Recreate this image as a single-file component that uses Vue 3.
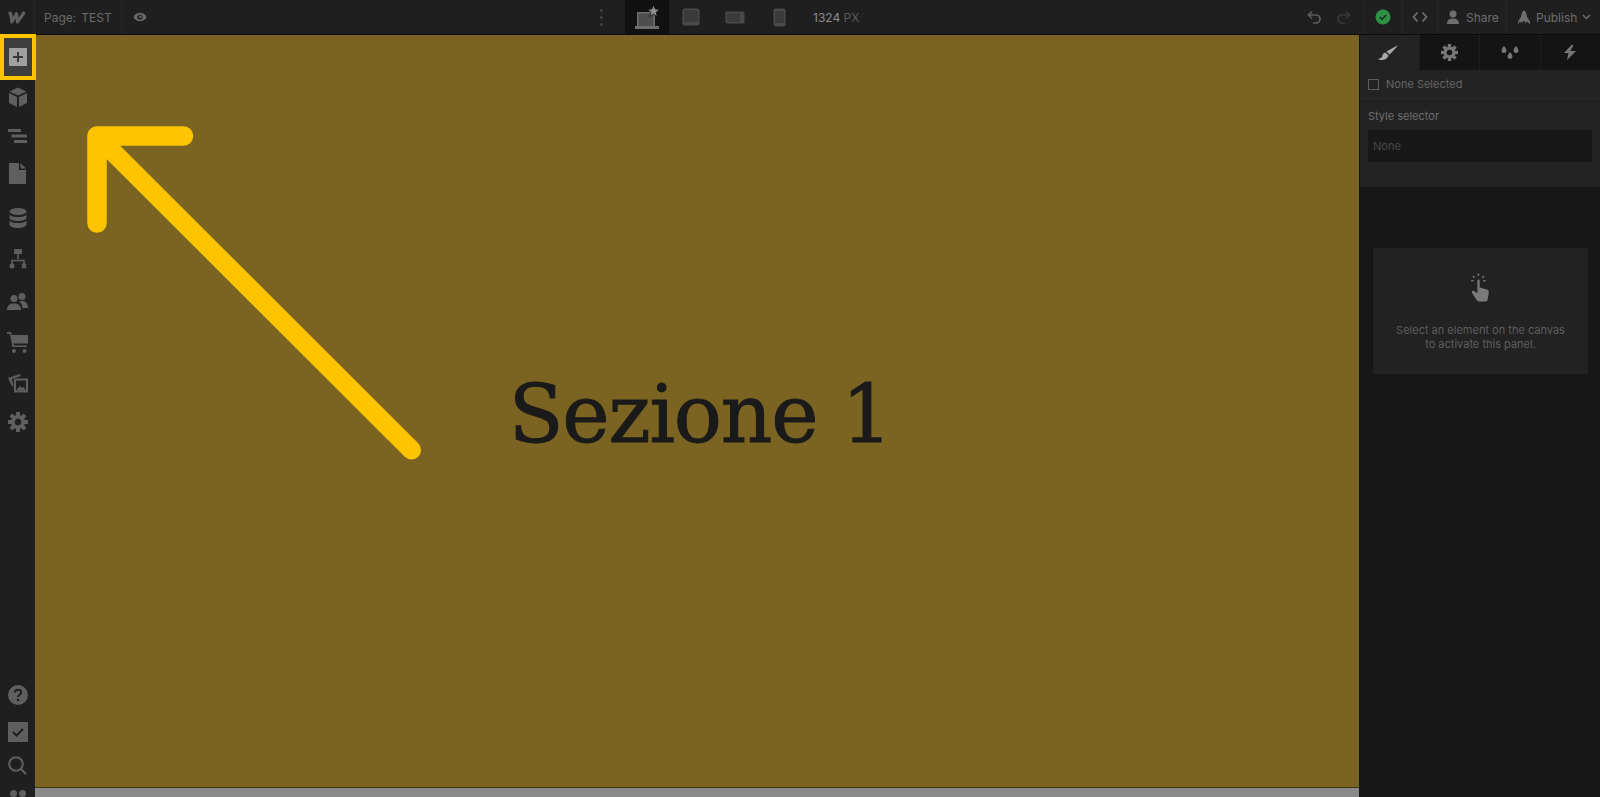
<template>
  <div class="designer">
    <!-- top bar -->
    <header class="topbar">
      <div class="top-left">
        <div class="logo-cell">
          <svg width="20" height="15" viewBox="0 0 19 15" fill="none"><path d="M1 3.200h2.200L4.300 12 9 3.500 10 12 17 2" stroke="#606060" stroke-width="3.100" stroke-linejoin="round"/></svg>
        </div>
        <div class="page-cell"><span class="page-label">Page:</span><span>TEST</span></div>
        <div class="eye-cell">
          <svg width="14" height="12" viewBox="0 0 14 12"><path d="M0.500 6C2 3 4.300 1.800 7 1.800S12 3 13.500 6C12 9 9.700 10.200 7 10.200S2 9 .5 6z" fill="#6a6a6a"/><circle cx="7" cy="6" r="2.600" fill="#1f1f1f"/><circle cx="7.300" cy="5.700" r="1.300" fill="#6a6a6a"/></svg>
        </div>
      </div>

      <div class="top-center">
        <div class="dots"><i></i><i></i><i></i></div>
        <div class="device active">
          <svg width="26" height="24" viewBox="0 0 26 24"><path d="M3 7h18v14H3z" fill="#6e6e6e"/><path d="M4.500 8.500h15V21h-15z" fill="#4d4d4d"/><path d="M1 21h24v3H1z" fill="#6e6e6e"/><path d="M19.500 0l1.800 4 4.200.4-3.200 2.800 1 4.200-3.800-2.200-3.700 2.200 1-4.200-3.300-2.800 4.300-.4z" fill="#8f8f8f" stroke="#111" stroke-width=".8"/></svg>
        </div>
        <div class="device">
          <svg width="18" height="18" viewBox="0 0 18 18"><rect x=".5" y=".5" width="17" height="17" rx="2" fill="#4a4a4a"/><rect x="2" y="2" width="14" height="12" fill="#3a3a3a"/></svg>
        </div>
        <div class="device">
          <svg width="20" height="13" viewBox="0 0 20 13"><rect x=".5" y=".5" width="19" height="12" rx="1.500" fill="#4a4a4a"/><rect x="2" y="2" width="13" height="9" fill="#3a3a3a"/></svg>
        </div>
        <div class="device">
          <svg width="13" height="19" viewBox="0 0 13 19"><rect x=".5" y=".5" width="12" height="18" rx="2" fill="#4a4a4a"/><rect x="2" y="3" width="9" height="12" fill="#3a3a3a"/></svg>
        </div>
        <div class="width-info"><b>1324</b> PX</div>
      </div>

      <div class="top-right">
        <div class="history">
          <svg width="15" height="14" viewBox="0 0 15 14" fill="none"><path d="M5 1.500 1.500 5 5 8.500M2 5h7a4 4 0 0 1 0 8H6" stroke="#5e5e5e" stroke-width="1.700"/></svg>
          <svg width="15" height="14" viewBox="0 0 15 14" fill="none"><path d="M10 1.500 13.500 5 10 8.500M13 5H6a4 4 0 0 0 0 8h3" stroke="#3a3a3a" stroke-width="1.700"/></svg>
        </div>
        <div class="status">
          <svg width="16" height="16" viewBox="0 0 16 16"><circle cx="8" cy="8" r="7.500" fill="#2f8f45"/><path d="M4.800 8.200 7 10.300l4.200-4.300" fill="none" stroke="#17351e" stroke-width="1.700"/></svg>
        </div>
        <div class="code">
          <svg width="16" height="12" viewBox="0 0 16 12" fill="none"><path d="M5.500 1.500 1.500 6l4 4.500M10.500 1.500l4 4.500-4 4.500" stroke="#6e6e6e" stroke-width="1.800"/></svg>
        </div>
        <div class="action share">
          <svg width="14" height="14" viewBox="0 0 14 14"><circle cx="7" cy="4" r="3.500" fill="#6e6e6e"/><path d="M1 14c0-4 2.500-5.500 6-5.500s6 1.500 6 5.500z" fill="#6e6e6e"/></svg>
          <span>Share</span>
        </div>
        <div class="action publish">
          <svg width="14" height="14" viewBox="0 0 14 14"><path d="M7 0c2 2 3 4.500 3 7l3 4.500V14l-3-2.500-1.500 1.500L7 10.500 4.500 13 3 11.500 1 14v-2.500L4 7c0-2.500 1-5 3-7z" fill="#6e6e6e"/></svg>
          <span>Publish</span>
          <svg width="9" height="6" viewBox="0 0 9 6" fill="none"><path d="M1 1l3.500 3.500L8 1" stroke="#6e6e6e" stroke-width="1.500"/></svg>
        </div>
      </div>
    </header>

    <div class="workspace">
      <!-- left rail -->
      <aside class="rail">
        <div class="rail-top">
          <div class="rail-item add">
            <svg width="18" height="18" viewBox="0 0 18 18"><rect width="18" height="18" rx="1" fill="#a0a0a0"/><path d="M9 4v10M4 9h10" stroke="#3a3a3a" stroke-width="2"/></svg>
          </div>
          <div class="rail-item cube">
            <svg width="20" height="20" viewBox="0 0 20 20"><path d="M10 0.500 18.500 4.500 10 8.500 1.500 4.500z" fill="#5f5f5f"/><path d="M1 6l8 4v10l-8-4zM19 6l-8 4v10l8-4z" fill="#5f5f5f"/></svg>
          </div>
          <div class="rail-item short">
            <svg width="20" height="16" viewBox="0 0 20 16"><path d="M0 1h13v3H0zM3.500 6.500H19v3H3.500zM6 12h13v3H6z" fill="#5f5f5f"/></svg>
          </div>
          <div class="rail-item short">
            <svg width="17" height="21" viewBox="0 0 17 21"><path d="M0 0h10v7h7v14H0zM11.500 0 17 5.500h-5.500z" fill="#5f5f5f"/></svg>
          </div>
        </div>
        <div class="rail-group">
          <div class="rail-item">
            <svg width="18" height="20" viewBox="0 0 18 20"><ellipse cx="9" cy="3.500" rx="8.500" ry="3.500" fill="#5f5f5f"/><path d="M.5 6.500C2 8.500 5 9 9 9s7-.5 8.500-2.500v3.300C17 12 13.500 13 9 13S1 12 .5 9.800zM.5 12.500C2 14.500 5 15 9 15s7-.5 8.500-2.500v4C17 18.700 13.500 20 9 20S1 18.700.5 16.500z" fill="#5f5f5f"/></svg>
          </div>
          <div class="rail-item wide-gap">
            <svg width="18" height="20" viewBox="0 0 18 20" fill="none"><rect x="5" y="0" width="8" height="5" fill="#5f5f5f"/><path d="M9 5v5M3 15v-3.500h12V15" stroke="#5f5f5f" stroke-width="1.600"/><circle cx="3" cy="17" r="2.500" fill="#5f5f5f"/><path d="M13 15l4 4m0-4-4 4" stroke="#5f5f5f" stroke-width="1.800"/></svg>
          </div>
          <div class="rail-item wide-gap">
            <svg width="21" height="17" viewBox="0 0 21 17"><circle cx="7" cy="5.500" r="3.500" fill="#5f5f5f"/><circle cx="15" cy="3.500" r="3.500" fill="#5f5f5f"/><path d="M0 17c0-5 3-6.500 7-6.500s7 1.500 7 6.500z" fill="#5f5f5f"/><path d="M15.500 15H21c0-5-2.500-7-6-7-1.300 0-2.300.3-3 .8 2 1.200 3.500 3.200 3.500 6.200z" fill="#5f5f5f"/></svg>
          </div>
          <div class="rail-item">
            <svg width="21" height="21" viewBox="0 0 21 21"><path d="M0 0h4l.8 3H21v8.500H6.500l.4 2H20V15H5.500L2.800 1.700H0z" fill="#5f5f5f"/><circle cx="7" cy="19" r="2" fill="#5f5f5f"/><circle cx="17.500" cy="19" r="2" fill="#5f5f5f"/></svg>
          </div>
          <div class="rail-item">
            <svg width="20" height="19" viewBox="0 0 20 19" fill="none"><path d="M0 4 12 0l.8 2L4 5l1.500 7-1.500.5z" fill="#5f5f5f"/><rect x="6" y="4.500" width="14" height="14" fill="#5f5f5f"/><rect x="8" y="6.500" width="10" height="10" fill="#1f1f1f"/><path d="M8 16.500l4-4.500 2 2 1.500-1 2.500 3.500z" fill="#5f5f5f"/></svg>
          </div>
          <div class="rail-item gear">
            <svg width="20" height="20" viewBox="0 0 20 20"><g fill="#5f5f5f"><circle cx="10" cy="10" r="7"/><rect x="8" y="0" width="4" height="20"/><rect x="8" y="0" width="4" height="20" transform="rotate(45 10 10)"/><rect x="8" y="0" width="4" height="20" transform="rotate(90 10 10)"/><rect x="8" y="0" width="4" height="20" transform="rotate(135 10 10)"/></g><circle cx="10" cy="10" r="3.200" fill="#1f1f1f"/></svg>
          </div>
        </div>

        <div class="rail-bottom">
          <div class="rail-item help">
            <svg width="20" height="20" viewBox="0 0 20 20"><circle cx="10" cy="10" r="10" fill="#5f5f5f"/><path d="M6.800 7.500C6.800 5.700 8.200 4.700 10 4.700s3.200 1 3.200 2.700c0 2.300-3.200 2.300-3.200 4.600" fill="none" stroke="#1f1f1f" stroke-width="1.900"/><circle cx="10" cy="15" r="1.300" fill="#1f1f1f"/></svg>
          </div>
          <div class="rail-item tasks">
            <svg width="20" height="20" viewBox="0 0 20 20"><rect width="20" height="20" fill="#5f5f5f"/><path d="M5 10l3.500 3.500L15 7" fill="none" stroke="#1f1f1f" stroke-width="2.200"/></svg>
          </div>
          <div class="rail-item find">
            <svg width="19" height="19" viewBox="0 0 19 19" fill="none"><circle cx="8" cy="8" r="6.800" stroke="#5f5f5f" stroke-width="2"/><path d="M13 13l5 5" stroke="#5f5f5f" stroke-width="2.200"/></svg>
          </div>
          <div class="avatars"><i></i><i></i></div>
        </div>
      </aside>

      <!-- canvas -->
      <main class="canvas">
        <section class="hero">
          <h1>Sezione 1</h1>
        </section>
        <div class="scrollbar"></div>
      </main>

      <!-- style panel -->
      <aside class="panel">
        <nav class="tabs">
          <div class="tab active">
            <svg width="21" height="16" viewBox="0 0 21 16"><path d="M20 0 8.500 6.500l2.800 3C14 7.500 17.500 3.500 20 0z" fill="#a8a8a8"/><path d="M7.500 7.500c-2 .3-2.800 1.600-3 3-.2 1.700-2.200 3-4.500 3.400C3 15.800 8.500 16 10.500 10.500z" fill="#a8a8a8"/></svg>
          </div>
          <div class="tab">
            <svg width="17" height="17" viewBox="0 0 20 20"><g fill="#767676"><circle cx="10" cy="10" r="7"/><rect x="8" y="0" width="4" height="20"/><rect x="8" y="0" width="4" height="20" transform="rotate(45 10 10)"/><rect x="8" y="0" width="4" height="20" transform="rotate(90 10 10)"/><rect x="8" y="0" width="4" height="20" transform="rotate(135 10 10)"/></g><circle cx="10" cy="10" r="3.200" fill="#141414"/></svg>
          </div>
          <div class="tab">
            <svg width="18" height="14" viewBox="0 0 18 14" fill="#767676"><path d="M3 0c1.500 2 2.500 3.200 2.500 4.500a2.500 2.500 0 0 1-5 0C.5 3.200 1.500 2 3 0zM15 0c1.500 2 2.500 3.200 2.500 4.500a2.500 2.500 0 0 1-5 0c0-1.300 1-2.500 2.500-4.500zM9 6c1.500 2 2.500 3.200 2.500 4.500a2.500 2.500 0 0 1-5 0C6.500 9.200 7.500 8 9 6z"/></svg>
          </div>
          <div class="tab">
            <svg width="12" height="15" viewBox="0 0 12 15"><path d="M7.500 0 0 8h4.500L3 15l9-9H6.500l3-6z" fill="#767676"/></svg>
          </div>
        </nav>

        <div class="selected-row">
          <span class="checkbox"></span>
          <span>None Selected</span>
        </div>

        <div class="selector">
          <label>Style selector</label>
          <div class="selector-input">None</div>
        </div>

        <div class="empty-card">
          <svg width="21" height="29" viewBox="0 0 20 28">
            <g stroke="#6e6e6e" stroke-width="1.600" fill="none"><path d="M1 7.500h2.500M2.500 3l2 1.500M8 .5v2.500M13.500 3l-2 1.500M12.500 7.500H15"/></g>
            <path d="M7 7.500c0-1.600 2.200-1.600 2.200 0v6.500l7 2c1.500.5 2 1.500 1.800 3l-1 6c-.2 1.500-1 2.500-2.500 2.500H9.500C8 27.500 7 26.800 6 25.500l-4-6c-1-1.500.5-3 2-2l3 2z" fill="#7a7a7a"/>
          </svg>
          <p>Select an element on the canvas<br>to activate this panel.</p>
        </div>
      </aside>
    </div>

    <!-- tutorial overlays -->
    <div class="highlight"></div>
    <svg class="arrow" width="340" height="340" viewBox="0 0 340 340" fill="none">
      <path d="M102.500 10H16v87" stroke="#ffc400" stroke-width="19.500" stroke-linecap="round" stroke-linejoin="round"/>
      <path d="M16 10l314.500 314" stroke="#ffc400" stroke-width="19" stroke-linecap="round"/>
    </svg>
  </div>
</template>

<script setup>
</script>

<style>
html, body {
  margin: 0;
  overflow: hidden;
}
</style>

<style scoped>
.designer {
  position: relative;
  display: flex;
  flex-direction: column;
  height: 797px;
  overflow: hidden;
  background: #1f1f1f;
  font-family: Inter, "Liberation Sans", sans-serif;
  color: #6e6e6e;
}

.topbar {
  display: flex;
  justify-content: space-between;
  height: 34px;
  flex-shrink: 0;
  border-bottom: 1px solid #0b0b0b;
  background: #1f1f1f;
  font-size: 12px;
}

.top-left,
.top-right {
  display: flex;
  width: 600px;
}

.top-right {
  justify-content: flex-end;
}

.top-left > div,
.top-right > div {
  display: flex;
  align-items: center;
  border-right: 1px solid #262626;
}

.top-right > div:last-child {
  border-right: none;
}

.logo-cell {
  justify-content: center;
  width: 35px;
  box-sizing: border-box;
}

.page-cell {
  gap: 5px;
  width: 87px;
  box-sizing: border-box;
  padding-left: 9px;
  color: #6a6a6a;
}

.eye-cell {
  padding-left: 11px;
  border-right: none !important;
}

.top-center {
  display: flex;
  align-items: center;
  flex: 1;
}

.dots {
  display: flex;
  flex-direction: column;
  gap: 4px;
  width: 25px;
}

.dots i {
  display: block;
  width: 3px;
  height: 3px;
  border-radius: 50%;
  background: #444;
}

.device {
  display: flex;
  align-items: center;
  justify-content: center;
  width: 44px;
  height: 34px;
}

.device.active {
  background: #111;
}

.width-info {
  margin-left: 12px;
  color: #5a5a5a;
}

.width-info b {
  color: #8a8a8a;
  font-weight: 400;
}

.history {
  gap: 14px;
  padding-right: 12px;
}

.status {
  justify-content: center;
  width: 39px;
  box-sizing: border-box;
}

.code {
  justify-content: center;
  width: 35px;
  box-sizing: border-box;
}

.action {
  box-sizing: border-box;
  font-size: 12px;
}

.share {
  gap: 6px;
  width: 69px;
  padding-left: 8px;
}

.publish {
  gap: 5px;
  width: 93px;
  padding-left: 10px;
}

.workspace {
  display: flex;
  flex: 1;
  min-height: 0;
}

.rail {
  display: flex;
  flex-direction: column;
  width: 35px;
  flex-shrink: 0;
  background: #1f1f1f;
}

.rail-top {
  padding-top: 1px;
}

.rail-item {
  display: flex;
  align-items: center;
  justify-content: center;
  height: 41px;
}

.rail-item.cube {
  height: 40px;
}

.rail-item.short {
  height: 37.500px;
}

.rail-item.add {
  background: #3d3d3d;
}

.rail-group {
  padding-top: 5px;
}

.rail-item.wide-gap {
  height: 42px;
}

.rail-item.gear {
  height: 35px;
}

.rail-bottom {
  margin-top: auto;
  height: 126px;
  padding-top: 3px;
  box-sizing: border-box;
  overflow: hidden;
}

.rail-item.help {
  height: 42px;
}

.rail-item.tasks {
  height: 32px;
}

.rail-item.find {
  height: 34px;
}

.avatars {
  display: flex;
  justify-content: center;
  gap: 2px;
  padding-top: 8px;
}

.avatars i {
  display: block;
  width: 7px;
  height: 7px;
  border-radius: 50%;
  background: #5f5f5f;
}

.canvas {
  display: flex;
  flex-direction: column;
  flex: 1;
  min-width: 0;
  background: #7b6322;
}

.hero {
  display: flex;
  align-items: center;
  justify-content: center;
  flex: 1;
  padding: 8px 0 0 6px;
}

.hero h1 {
  margin: 0;
  font-family: "DejaVu Serif", "Liberation Serif", serif;
  font-size: 80px;
  font-weight: 400;
  line-height: 1.2;
  letter-spacing: -1.200px;
  color: #1a1a1a;
  -webkit-text-stroke: 1px #1a1a1a;
}

.scrollbar {
  height: 9px;
  border-top: 1px solid #3f3514;
  background: #8a8a8a;
}

.panel {
  width: 241px;
  flex-shrink: 0;
  border-left: 1px solid #141414;
  box-sizing: border-box;
  background: #171717;
}

.tabs {
  display: flex;
  height: 35px;
  background: #141414;
}

.tab {
  display: flex;
  align-items: center;
  justify-content: center;
  flex: 1;
  border-left: 1px solid #1e1e1e;
}

.tab.active {
  flex: 0 0 59px;
  box-sizing: border-box;
  border-left: none;
  padding-right: 2px;
  background: #232323;
}

.selected-row {
  display: flex;
  align-items: center;
  gap: 7px;
  height: 28px;
  padding-left: 8px;
  border-bottom: 1px solid #2a2a2a;
  background: #232323;
  font-size: 11px;
  color: #666;
}

.checkbox {
  width: 9px;
  height: 9px;
  border: 1px solid #5c5c5c;
}

.selector {
  height: 88px;
  box-sizing: border-box;
  padding: 10px 8px 0;
  background: #232323;
}

.selector label {
  display: block;
  height: 21px;
  font-size: 11px;
  line-height: 14px;
  color: #6e6e6e;
}

.selector-input {
  height: 32px;
  padding-left: 5px;
  background: #181818;
  font-size: 11px;
  line-height: 32px;
  color: #484848;
}

.empty-card {
  display: flex;
  flex-direction: column;
  align-items: center;
  height: 126px;
  box-sizing: border-box;
  margin: 61px 12px 0 13px;
  padding-top: 25px;
  background: #222;
}

.empty-card p {
  margin: 21px 0 0;
  font-size: 11px;
  line-height: 14px;
  text-align: center;
  color: #5e5e5e;
}

.highlight {
  position: absolute;
  left: 0;
  top: 34px;
  width: 36px;
  height: 46px;
  box-sizing: border-box;
  border: 4px solid #ffc400;
}

.arrow {
  position: absolute;
  left: 81px;
  top: 126px;
}
</style>
